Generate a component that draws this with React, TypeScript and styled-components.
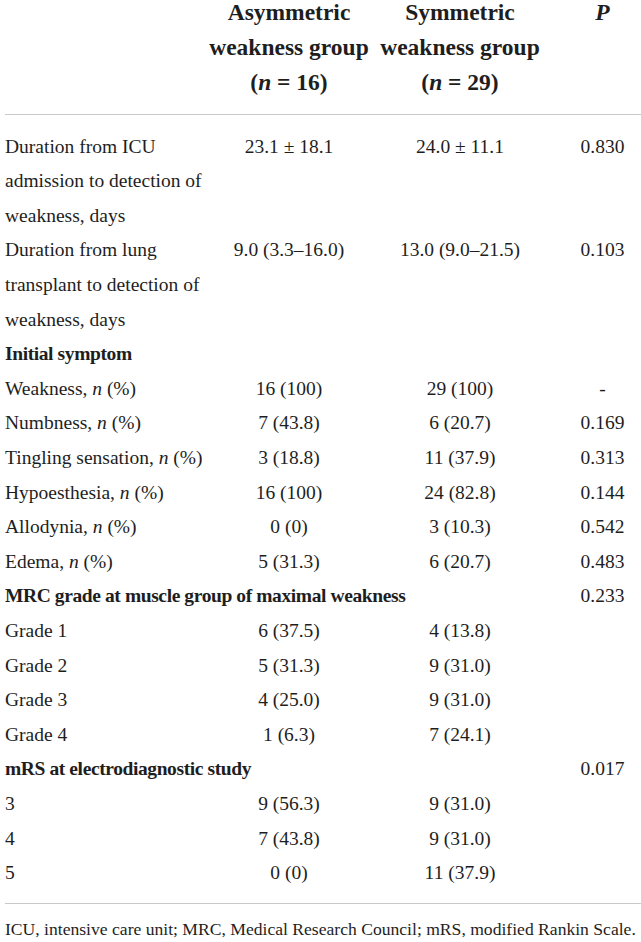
import React from "react";
import styled, { createGlobalStyle } from "styled-components";

const Global = createGlobalStyle`
  html, body { margin: 0; padding: 0; background: #ffffff; }
  body { font-family: "Liberation Serif", "Times New Roman", serif; color: #1e1e1e; }
`;

const COLS = "201px 166px 176px 1fr";

const Page = styled.div`
  width: 641px;
  padding-left: 5px;
  box-sizing: border-box;
  overflow: hidden;
`;

const HeaderRow = styled.div`
  display: grid;
  grid-template-columns: ${COLS};
  padding: 0 0 14px;
  margin-top: -5px;
  border-bottom: 1px solid #c9c9c9;
`;

const HeaderCell = styled.div<{ $shift?: number }>`
  font-size: 23.5px;
  font-weight: 700;
  line-height: 35px;
  text-align: center;
  white-space: nowrap;
  padding-left: ${(p) => p.$shift ?? 0}px;
`;

const Body = styled.div`
  padding: 14.7px 0 12px;
  border-bottom: 1px solid #c9c9c9;
`;

const Row = styled.div`
  display: grid;
  grid-template-columns: ${COLS};
  font-size: 19.5px;
  line-height: 34.6px;
`;

const Label = styled.div<{ $span?: number; $bold?: boolean }>`
  grid-column: span ${(p) => p.$span ?? 1};
  font-weight: ${(p) => (p.$bold ? 700 : 400)};
  letter-spacing: ${(p) => (p.$bold ? "-0.4px" : "0")};
  white-space: nowrap;
`;

const Value = styled.div<{ $shift?: number }>`
  text-align: center;
  white-space: nowrap;
  padding-left: ${(p) => p.$shift ?? 0}px;
`;

const Footnote = styled.div`
  font-size: 17.6px;
  line-height: 30px;
  margin-top: 10px;
  white-space: nowrap;
`;

type RowData = {
  label: React.ReactNode;
  a?: string;
  b?: string;
  p?: string;
  section?: boolean;
};

const N = () => <i>n</i>;

const rows: RowData[] = [
  {
    label: (
      <>
        Duration from ICU
        <br />
        admission to detection of
        <br />
        weakness, days
      </>
    ),
    a: "23.1 ± 18.1",
    b: "24.0 ± 11.1",
    p: "0.830",
  },
  {
    label: (
      <>
        Duration from lung
        <br />
        transplant to detection of
        <br />
        weakness, days
      </>
    ),
    a: "9.0 (3.3–16.0)",
    b: "13.0 (9.0–21.5)",
    p: "0.103",
  },
  { label: "Initial symptom", section: true },
  { label: <>Weakness, <N /> (%)</>, a: "16 (100)", b: "29 (100)", p: "-" },
  { label: <>Numbness, <N /> (%)</>, a: "7 (43.8)", b: "6 (20.7)", p: "0.169" },
  { label: <>Tingling sensation, <N /> (%)</>, a: "3 (18.8)", b: "11 (37.9)", p: "0.313" },
  { label: <>Hypoesthesia, <N /> (%)</>, a: "16 (100)", b: "24 (82.8)", p: "0.144" },
  { label: <>Allodynia, <N /> (%)</>, a: "0 (0)", b: "3 (10.3)", p: "0.542" },
  { label: <>Edema, <N /> (%)</>, a: "5 (31.3)", b: "6 (20.7)", p: "0.483" },
  { label: "MRC grade at muscle group of maximal weakness", section: true, p: "0.233" },
  { label: "Grade 1", a: "6 (37.5)", b: "4 (13.8)" },
  { label: "Grade 2", a: "5 (31.3)", b: "9 (31.0)" },
  { label: "Grade 3", a: "4 (25.0)", b: "9 (31.0)" },
  { label: "Grade 4", a: "1 (6.3)", b: "7 (24.1)" },
  { label: "mRS at electrodiagnostic study", section: true, p: "0.017" },
  { label: "3", a: "9 (56.3)", b: "9 (31.0)" },
  { label: "4", a: "7 (43.8)", b: "9 (31.0)" },
  { label: "5", a: "0 (0)", b: "11 (37.9)" },
];

export default function App() {
  return (
    <>
      <Global />
      <Page>
        <HeaderRow>
          <div />
          <HeaderCell>
            Asymmetric
            <br />
            weakness group
            <br />
            (<i>n</i> = 16)
          </HeaderCell>
          <HeaderCell>
            Symmetric
            <br />
            weakness group
            <br />
            (<i>n</i> = 29)
          </HeaderCell>
          <HeaderCell $shift={16}>
            <i>P</i>
          </HeaderCell>
        </HeaderRow>
        <Body>
          {rows.map((r, i) =>
            r.section ? (
              <Row key={i}>
                <Label $span={r.p ? 3 : 4} $bold>
                  {r.label}
                </Label>
                {r.p && <Value $shift={16}>{r.p}</Value>}
              </Row>
            ) : (
              <Row key={i}>
                <Label>{r.label}</Label>
                <Value>{r.a}</Value>
                <Value>{r.b}</Value>
                <Value $shift={16}>{r.p ?? ""}</Value>
              </Row>
            )
          )}
        </Body>
        <Footnote>
          ICU, intensive care unit; MRC, Medical Research Council; mRS, modified Rankin Scale.
        </Footnote>
      </Page>
    </>
  );
}
